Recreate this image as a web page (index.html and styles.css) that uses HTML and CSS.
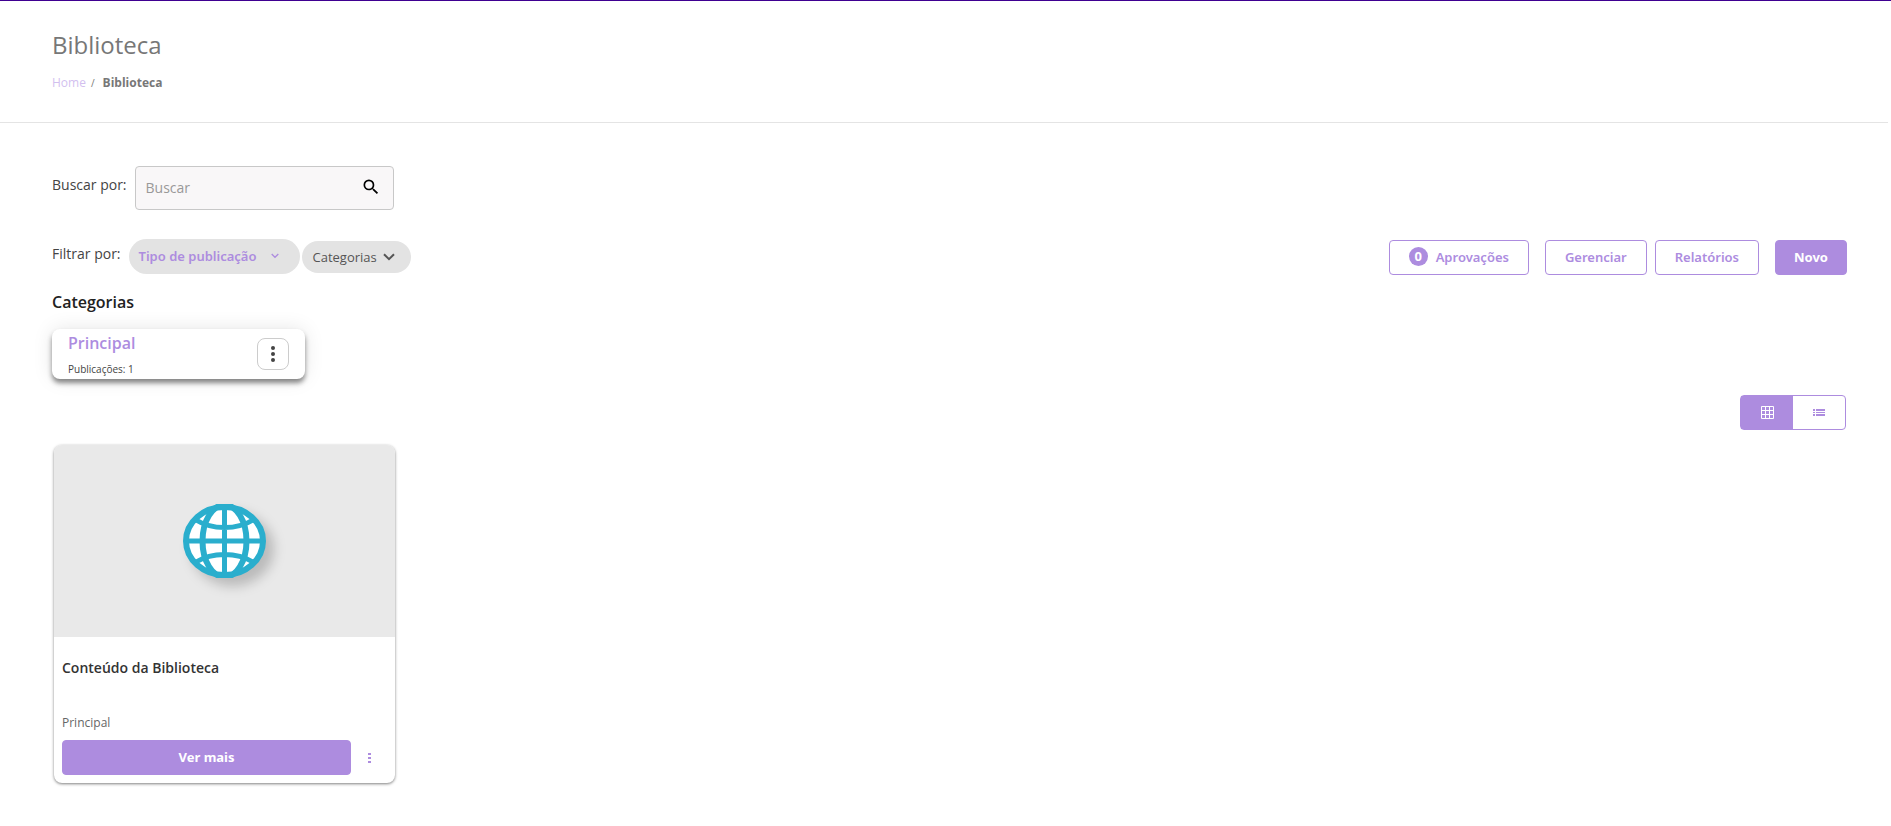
FILE: index.html
```html
<!DOCTYPE html>
<html lang="pt-BR">

<head>
    <meta charset="UTF-8">
    <meta name="viewport" content="width=device-width, initial-scale=1.0">
    <title>Biblioteca</title>
    <link rel="stylesheet" href="styles.css">
</head>

<body>
    <header class="page-header">
        <h1>Biblioteca</h1>
        <nav class="breadcrumb">
            <a href="#">Home</a>
            <span class="separator">/</span>
            <strong>Biblioteca</strong>
        </nav>
    </header>

    <main class="content">
        <!-- Busca -->
        <form class="search-row">
            <label for="search">Buscar por:</label>
            <div class="search-box">
                <input type="text" id="search" placeholder="Buscar">
                <button type="button" class="search-button" aria-label="Buscar">
                    <svg width="20" height="20" viewBox="0 0 24 24" fill="currentColor">
                        <path d="M15.5 14h-.79l-.28-.27A6.47 6.47 0 0 0 16 9.5 6.5 6.5 0 1 0 9.5 16c1.61 0 3.09-.59 4.23-1.57l.27.28v.79l5 4.99L20.49 19l-4.99-5zm-6 0C7.01 14 5 11.99 5 9.5S7.01 5 9.5 5 14 7.01 14 9.5 11.99 14 9.5 14z" />
                    </svg>
                </button>
            </div>
        </form>

        <!-- Filtros e ações -->
        <div class="toolbar">
            <div class="filters">
                <span class="filter-label">Filtrar por:</span>
                <button type="button" class="pill pill-type">
                    Tipo de publicação
                    <svg width="8" height="6" viewBox="0 0 8 6" fill="none" stroke="currentColor" stroke-width="1.3">
                        <path d="M.7 1 4 4.3 7.3 1" />
                    </svg>
                </button>
                <button type="button" class="pill pill-category">
                    Categorias
                    <svg width="12" height="8" viewBox="0 0 12 8" fill="none" stroke="currentColor" stroke-width="2">
                        <path d="M1 1.2 6 6.2 11 1.2" />
                    </svg>
                </button>
            </div>
            <div class="actions">
                <button type="button" class="btn btn-approvals"><span class="count">0</span>Aprovações</button>
                <div class="btn-pair">
                    <button type="button" class="btn">Gerenciar</button>
                    <button type="button" class="btn">Relatórios</button>
                </div>
                <button type="button" class="btn btn-primary">Novo</button>
            </div>
        </div>

        <!-- Categorias -->
        <h2>Categorias</h2>
        <div class="category-card">
            <div>
                <a href="#" class="category-name">Principal</a>
                <p class="category-count">Publicações: 1</p>
            </div>
            <button type="button" class="category-menu" aria-label="Opções da categoria">
                <svg width="4" height="16" viewBox="0 0 4 16" fill="currentColor">
                    <circle cx="2" cy="2" r="2" />
                    <circle cx="2" cy="8" r="2" />
                    <circle cx="2" cy="14" r="2" />
                </svg>
            </button>
        </div>

        <div class="view-toggle">
            <button type="button" class="view-option active" aria-label="Grade">
                <svg width="13" height="13" viewBox="0 0 13 13" fill="none" stroke="currentColor">
                    <path d="M.5.5h12v12H.5zM4.5 0v13M8.5 0v13M0 4.5h13M0 8.5h13" />
                </svg>
            </button>
            <button type="button" class="view-option" aria-label="Lista">
                <svg width="12" height="7" viewBox="0 0 12 7" fill="currentColor">
                    <path d="M0 0h2v2H0zM3 0h9v2H3zM0 3h2v1H0zM3 3h9v1H3zM0 5h2v2H0zM3 5h9v2H3z" />
                </svg>
            </button>
        </div>

        <!-- Publicações -->
        <div class="cards">
            <article class="card">
                <div class="card-cover">
                    <svg class="globe" width="83" height="74" viewBox="0 0 83 74" fill="none" stroke="#2aaecd">
                        <ellipse cx="41.5" cy="37" rx="38.500" ry="34" fill="#fff" />
                        <ellipse cx="41.5" cy="37" rx="22" ry="36" />
                        <path stroke-width="5" d="M41.5 2v70M2 37h79M13 16Q25 23.500 41.500 23.500T70 16M13 58Q25 50.500 41.500 50.500T70 58" />
                    </svg>
                </div>
                <div class="card-body">
                    <h3>Conteúdo da Biblioteca</h3>
                    <p class="card-category">Principal</p>
                    <div class="card-footer">
                        <button type="button" class="btn btn-primary btn-more">Ver mais</button>
                        <button type="button" class="card-menu" aria-label="Opções da publicação">
                            <svg width="3" height="10" viewBox="0 0 3 10" fill="currentColor">
                                <path d="M0 0h3v2H0zM0 4h3v2H0zM0 8h3v2H0z" />
                            </svg>
                        </button>
                    </div>
                </div>
            </article>
        </div>
    </main>
</body>

</html>
```
FILE: styles.css
```css
* {
    box-sizing: border-box;
}

body {
    margin: 0;
    font-family: "Open Sans", sans-serif;
    font-size: 14px;
    color: #444;
    background-color: #fff;
    border-top: 1px solid #3f0091;
}

h1,
h2,
h3,
p {
    margin: 0;
}

a {
    text-decoration: none;
}

button {
    font-family: inherit;
    cursor: pointer;
}

svg {
    display: block;
}

.page-header {
    margin-right: 3px;
    padding: 28px 52px 30px;
    border-bottom: 1px solid #e4e4e4;
}

h1 {
    font-size: 24px;
    font-weight: 400;
    line-height: 32px;
    color: #777;
}

.breadcrumb {
    display: flex;
    align-items: center;
    margin-top: 13px;
    font-size: 12px;
    line-height: 18px;
    color: #777;
}

.breadcrumb a {
    color: #d2bfef;
}

.separator {
    margin: 0 8px 0 5px;
    font-size: 10px;
}

.content {
    padding: 43px 44px 40px 52px;
}

/* Busca */
.search-row {
    display: flex;
    align-items: center;
    gap: 8px;
}

.search-row label,
.filter-label {
    padding-bottom: 7px;
}

.search-box {
    display: flex;
    align-items: center;
    width: 259px;
    height: 44px;
    border: 1px solid #c8c8c8;
    border-radius: 4px;
    background-color: #f9f7f8;
}

.search-box input {
    flex: 1;
    min-width: 0;
    padding: 0 10px 2px;
    border: 0;
    background: none;
    font-family: inherit;
    font-size: 14px;
    color: #444;
}

.search-box input::placeholder {
    color: #999;
}

.search-button {
    padding: 0 12px 2px;
    border: 0;
    background: none;
    color: #000;
}

/* Filtros e ações */
.toolbar {
    display: flex;
    justify-content: space-between;
    align-items: flex-start;
    margin-top: 29px;
}

.filters,
.actions,
.btn-pair {
    display: flex;
    align-items: center;
}

.filter-label {
    margin-right: 8px;
}

.pill {
    display: flex;
    align-items: center;
    border: 0;
    border-radius: 18px;
    background-color: #e3e3e3;
    font-size: 13px;
}

.pill-type {
    height: 35px;
    padding: 0 21px 2px 10px;
    gap: 15px;
    font-family: "Noto Sans", sans-serif;
    font-weight: 600;
    color: #ad8cdf;
}

.pill-category {
    height: 32px;
    margin-left: 2px;
    padding: 0 16px 0 10px;
    gap: 6px;
    color: #555;
}

.actions {
    gap: 16px;
    padding-top: 1px;
}

.btn-pair {
    gap: 8px;
}

.btn {
    display: flex;
    align-items: center;
    justify-content: center;
    height: 35px;
    padding: 0 19px 2px;
    border: 1px solid #ad8cdf;
    border-radius: 4px;
    background-color: #fff;
    font-family: "Noto Sans", sans-serif;
    font-size: 13px;
    font-weight: 600;
    color: #ad8cdf;
}

.btn-primary {
    padding: 0 18px 2px;
    background-color: #ad8cdf;
    font-weight: 700;
    color: #fff;
}

.count {
    width: 19px;
    margin-right: 8px;
    border-radius: 50%;
    background-color: #ad8cdf;
    line-height: 19px;
    font-weight: 700;
    color: #fff;
}

/* Categorias */
h2 {
    margin-top: 15px;
    font-size: 16px;
    font-weight: 600;
    line-height: 24px;
    color: #222;
}

.category-card {
    display: flex;
    justify-content: space-between;
    align-items: center;
    width: 253px;
    height: 50px;
    margin-top: 15px;
    padding: 0 16px;
    border-radius: 8px;
    box-shadow: 0 4px 5px rgba(0, 0, 0, 0.45), 0 0 20px rgba(0, 0, 0, 0.1);
}

.category-name {
    display: block;
    font-size: 16px;
    font-weight: 600;
    line-height: 26px;
    color: #ad8cdf;
}

.category-count {
    margin-top: 4px;
    font-size: 10px;
    line-height: 18px;
}

.category-menu {
    display: flex;
    align-items: center;
    justify-content: center;
    width: 32px;
    height: 32px;
    padding: 0;
    border: 1px solid #ccc;
    border-radius: 8px;
    background-color: #fff;
    color: #444;
}

.view-toggle {
    display: flex;
    width: 106px;
    margin: 16px 1px 0 auto;
    border: 1px solid #ad8cdf;
    border-radius: 4px;
}

.view-option {
    display: flex;
    flex: 1;
    align-items: center;
    justify-content: center;
    height: 33px;
    border: 0;
    background: none;
    color: #ad8cdf;
}

.view-option.active {
    background-color: #ad8cdf;
    color: #fff;
}

/* Publicações */
.cards {
    display: flex;
    padding: 15px 2px;
}

.card {
    width: 341px;
    border-radius: 8px;
    box-shadow: 0 1px 3px rgba(0, 0, 0, 0.5);
    overflow: hidden;
}

.card-cover {
    display: flex;
    align-items: center;
    justify-content: center;
    height: 192px;
    background-color: #e9e9e9;
}

.globe {
    stroke-width: 6;
    filter: drop-shadow(8px 8px 6px rgba(0, 0, 0, 0.2));
}

.card-body {
    padding: 21px 8px 8px;
}

h3 {
    font-size: 14px;
    font-weight: 600;
    line-height: 20px;
    color: #333;
}

.card-category {
    margin-top: 36px;
    font-size: 12px;
    line-height: 18px;
    color: #666;
}

.card-footer {
    display: flex;
    align-items: center;
    margin-top: 8px;
}

.btn-more {
    flex: 1;
}

.card-menu {
    display: flex;
    justify-content: center;
    width: 36px;
    padding: 8px 0;
    border: 0;
    background: none;
    color: #ad8cdf;
}
```
